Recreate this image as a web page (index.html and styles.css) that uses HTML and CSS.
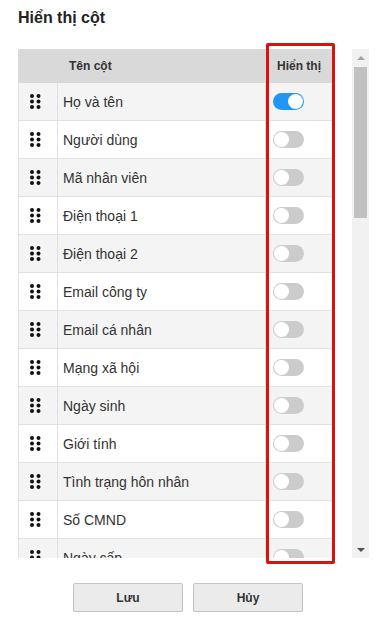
FILE: index.html
```html
<!DOCTYPE html>
<html lang="vi">
<head>
<meta charset="utf-8">
<title>Hiển thị cột</title>
<link rel="stylesheet" href="styles.css">
</head>
<body>
<div class="panel">
  <h1 class="title">Hiển thị cột</h1>
  <div class="list-wrap">
    <div class="list">
      <table class="cols">
        <thead>
          <tr>
            <th class="c-drag"></th>
            <th class="c-name">Tên cột</th>
            <th class="c-show">Hiển thị</th>
          </tr>
        </thead>
        <tbody>
          <tr><td class="c-drag"><svg class="grip" width="11" height="16" viewBox="0 0 11 16"><circle cx="2" cy="2" r="2"/><circle cx="8.5" cy="2" r="2"/><circle cx="2" cy="7.5" r="2"/><circle cx="8.5" cy="7.5" r="2"/><circle cx="2" cy="13" r="2"/><circle cx="8.5" cy="13" r="2"/></svg></td><td class="c-name">Họ và tên</td><td class="c-show"><span class="toggle on"></span></td></tr>
          <tr><td class="c-drag"><svg class="grip" width="11" height="16" viewBox="0 0 11 16"><circle cx="2" cy="2" r="2"/><circle cx="8.5" cy="2" r="2"/><circle cx="2" cy="7.5" r="2"/><circle cx="8.5" cy="7.5" r="2"/><circle cx="2" cy="13" r="2"/><circle cx="8.5" cy="13" r="2"/></svg></td><td class="c-name">Người dùng</td><td class="c-show"><span class="toggle"></span></td></tr>
          <tr><td class="c-drag"><svg class="grip" width="11" height="16" viewBox="0 0 11 16"><circle cx="2" cy="2" r="2"/><circle cx="8.5" cy="2" r="2"/><circle cx="2" cy="7.5" r="2"/><circle cx="8.5" cy="7.5" r="2"/><circle cx="2" cy="13" r="2"/><circle cx="8.5" cy="13" r="2"/></svg></td><td class="c-name">Mã nhân viên</td><td class="c-show"><span class="toggle"></span></td></tr>
          <tr><td class="c-drag"><svg class="grip" width="11" height="16" viewBox="0 0 11 16"><circle cx="2" cy="2" r="2"/><circle cx="8.5" cy="2" r="2"/><circle cx="2" cy="7.5" r="2"/><circle cx="8.5" cy="7.5" r="2"/><circle cx="2" cy="13" r="2"/><circle cx="8.5" cy="13" r="2"/></svg></td><td class="c-name">Điện thoại 1</td><td class="c-show"><span class="toggle"></span></td></tr>
          <tr><td class="c-drag"><svg class="grip" width="11" height="16" viewBox="0 0 11 16"><circle cx="2" cy="2" r="2"/><circle cx="8.5" cy="2" r="2"/><circle cx="2" cy="7.5" r="2"/><circle cx="8.5" cy="7.5" r="2"/><circle cx="2" cy="13" r="2"/><circle cx="8.5" cy="13" r="2"/></svg></td><td class="c-name">Điện thoại 2</td><td class="c-show"><span class="toggle"></span></td></tr>
          <tr><td class="c-drag"><svg class="grip" width="11" height="16" viewBox="0 0 11 16"><circle cx="2" cy="2" r="2"/><circle cx="8.5" cy="2" r="2"/><circle cx="2" cy="7.5" r="2"/><circle cx="8.5" cy="7.5" r="2"/><circle cx="2" cy="13" r="2"/><circle cx="8.5" cy="13" r="2"/></svg></td><td class="c-name">Email công ty</td><td class="c-show"><span class="toggle"></span></td></tr>
          <tr><td class="c-drag"><svg class="grip" width="11" height="16" viewBox="0 0 11 16"><circle cx="2" cy="2" r="2"/><circle cx="8.5" cy="2" r="2"/><circle cx="2" cy="7.5" r="2"/><circle cx="8.5" cy="7.5" r="2"/><circle cx="2" cy="13" r="2"/><circle cx="8.5" cy="13" r="2"/></svg></td><td class="c-name">Email cá nhân</td><td class="c-show"><span class="toggle"></span></td></tr>
          <tr><td class="c-drag"><svg class="grip" width="11" height="16" viewBox="0 0 11 16"><circle cx="2" cy="2" r="2"/><circle cx="8.5" cy="2" r="2"/><circle cx="2" cy="7.5" r="2"/><circle cx="8.5" cy="7.5" r="2"/><circle cx="2" cy="13" r="2"/><circle cx="8.5" cy="13" r="2"/></svg></td><td class="c-name">Mạng xã hội</td><td class="c-show"><span class="toggle"></span></td></tr>
          <tr><td class="c-drag"><svg class="grip" width="11" height="16" viewBox="0 0 11 16"><circle cx="2" cy="2" r="2"/><circle cx="8.5" cy="2" r="2"/><circle cx="2" cy="7.5" r="2"/><circle cx="8.5" cy="7.5" r="2"/><circle cx="2" cy="13" r="2"/><circle cx="8.5" cy="13" r="2"/></svg></td><td class="c-name">Ngày sinh</td><td class="c-show"><span class="toggle"></span></td></tr>
          <tr><td class="c-drag"><svg class="grip" width="11" height="16" viewBox="0 0 11 16"><circle cx="2" cy="2" r="2"/><circle cx="8.5" cy="2" r="2"/><circle cx="2" cy="7.5" r="2"/><circle cx="8.5" cy="7.5" r="2"/><circle cx="2" cy="13" r="2"/><circle cx="8.5" cy="13" r="2"/></svg></td><td class="c-name">Giới tính</td><td class="c-show"><span class="toggle"></span></td></tr>
          <tr><td class="c-drag"><svg class="grip" width="11" height="16" viewBox="0 0 11 16"><circle cx="2" cy="2" r="2"/><circle cx="8.5" cy="2" r="2"/><circle cx="2" cy="7.5" r="2"/><circle cx="8.5" cy="7.5" r="2"/><circle cx="2" cy="13" r="2"/><circle cx="8.5" cy="13" r="2"/></svg></td><td class="c-name">Tình trạng hôn nhân</td><td class="c-show"><span class="toggle"></span></td></tr>
          <tr><td class="c-drag"><svg class="grip" width="11" height="16" viewBox="0 0 11 16"><circle cx="2" cy="2" r="2"/><circle cx="8.5" cy="2" r="2"/><circle cx="2" cy="7.5" r="2"/><circle cx="8.5" cy="7.5" r="2"/><circle cx="2" cy="13" r="2"/><circle cx="8.5" cy="13" r="2"/></svg></td><td class="c-name">Số CMND</td><td class="c-show"><span class="toggle"></span></td></tr>
          <tr><td class="c-drag"><svg class="grip" width="11" height="16" viewBox="0 0 11 16"><circle cx="2" cy="2" r="2"/><circle cx="8.5" cy="2" r="2"/><circle cx="2" cy="7.5" r="2"/><circle cx="8.5" cy="7.5" r="2"/><circle cx="2" cy="13" r="2"/><circle cx="8.5" cy="13" r="2"/></svg></td><td class="c-name">Ngày cấp</td><td class="c-show"><span class="toggle"></span></td></tr>
          <tr><td class="c-drag"><svg class="grip" width="11" height="16" viewBox="0 0 11 16"><circle cx="2" cy="2" r="2"/><circle cx="8.5" cy="2" r="2"/><circle cx="2" cy="7.5" r="2"/><circle cx="8.5" cy="7.5" r="2"/><circle cx="2" cy="13" r="2"/><circle cx="8.5" cy="13" r="2"/></svg></td><td class="c-name">Nơi cấp</td><td class="c-show"><span class="toggle"></span></td></tr>
        </tbody>
      </table>
    </div>
    <div class="scrollbar">
      <div class="sb-btn"><span class="arrow up"></span></div>
      <div class="sb-track"><div class="sb-thumb"></div></div>
      <div class="sb-btn"><span class="arrow down"></span></div>
    </div>
    <div class="highlight"></div>
  </div>
  <div class="actions">
    <button class="btn">Lưu</button>
    <button class="btn">Hủy</button>
  </div>
</div>
</body>
</html>
```

FILE: styles.css
```css
html, body {
  margin: 0;
  padding: 0;
  background: #ffffff;
}
body {
  font-family: "Liberation Sans", Arial, sans-serif;
  color: #333333;
  width: 379px;
  height: 626px;
  overflow: hidden;
}
.panel {
  padding: 8px 10px 0 18px;
}
.title {
  margin: 0;
  font-size: 16px;
  line-height: 20px;
  font-weight: bold;
  color: #222222;
}
.list-wrap {
  position: relative;
  display: flex;
  margin-top: 21px;
  height: 509px;
}
.list {
  width: 316px;
  overflow: hidden;
}
.cols {
  width: 315px;
  border-collapse: collapse;
  table-layout: fixed;
}
.cols th {
  background: #d9d9d9;
  height: 33px;
  padding: 0;
  font-size: 12px;
  font-weight: bold;
  color: #333333;
  border: 1px solid #d9d9d9;
  border-top: 0;
}
.cols td {
  height: 37px;
  padding: 0;
  border: 1px solid #e1e1e1;
  font-size: 14px;
  vertical-align: middle;
}
.cols tbody tr:nth-child(odd) td {
  background: #f4f4f4;
}
.cols .c-drag {
  width: 39px;
  padding-left: 11px;
  text-align: left;
  box-sizing: border-box;
}
.cols th.c-name {
  text-align: left;
  padding-left: 11px;
}
.cols td.c-name {
  padding-left: 5px;
  color: #333333;
}
.cols .c-show {
  width: 66px;
}
.cols th.c-show {
  text-align: center;
}
.cols td.c-show {
  padding-left: 7px;
}
.grip {
  display: block;
  fill: #111111;
}
.toggle {
  display: block;
  position: relative;
  width: 31px;
  height: 17px;
  border-radius: 9px;
  background: #cccccc;
}
.toggle::after {
  content: "";
  position: absolute;
  left: 1px;
  top: 1px;
  width: 15px;
  height: 15px;
  border-radius: 50%;
  background: #ffffff;
}
.toggle.on {
  background: #2196f3;
}
.toggle.on::after {
  left: 15px;
}
.scrollbar {
  margin-left: auto;
  width: 17px;
  display: flex;
  flex-direction: column;
  background: #f1f1f1;
}
.sb-btn {
  height: 17px;
  display: flex;
  align-items: center;
  justify-content: center;
}
.sb-track {
  flex: 1;
  padding: 1px 2px;
}
.sb-thumb {
  height: 151px;
  background: #c1c1c1;
}
.arrow {
  width: 0;
  height: 0;
  border-left: 4px solid transparent;
  border-right: 4px solid transparent;
}
.arrow.up {
  border-bottom: 4px solid #a3a3a3;
}
.arrow.down {
  border-top: 4px solid #505050;
}
.highlight {
  position: absolute;
  left: 248px;
  top: -6px;
  width: 69px;
  height: 521px;
  box-sizing: border-box;
  border: 3px solid #dd1010;
  border-radius: 2px;
  pointer-events: none;
}
.actions {
  display: flex;
  justify-content: center;
  gap: 10px;
  margin-top: 25px;
  padding-right: 11px;
}
.btn {
  width: 110px;
  height: 29px;
  border: 1px solid #c4c4c4;
  border-radius: 2px;
  background: #ebebeb;
  font-family: "Liberation Sans", Arial, sans-serif;
  font-size: 12px;
  font-weight: bold;
  color: #333333;
  padding: 0;
}
```
